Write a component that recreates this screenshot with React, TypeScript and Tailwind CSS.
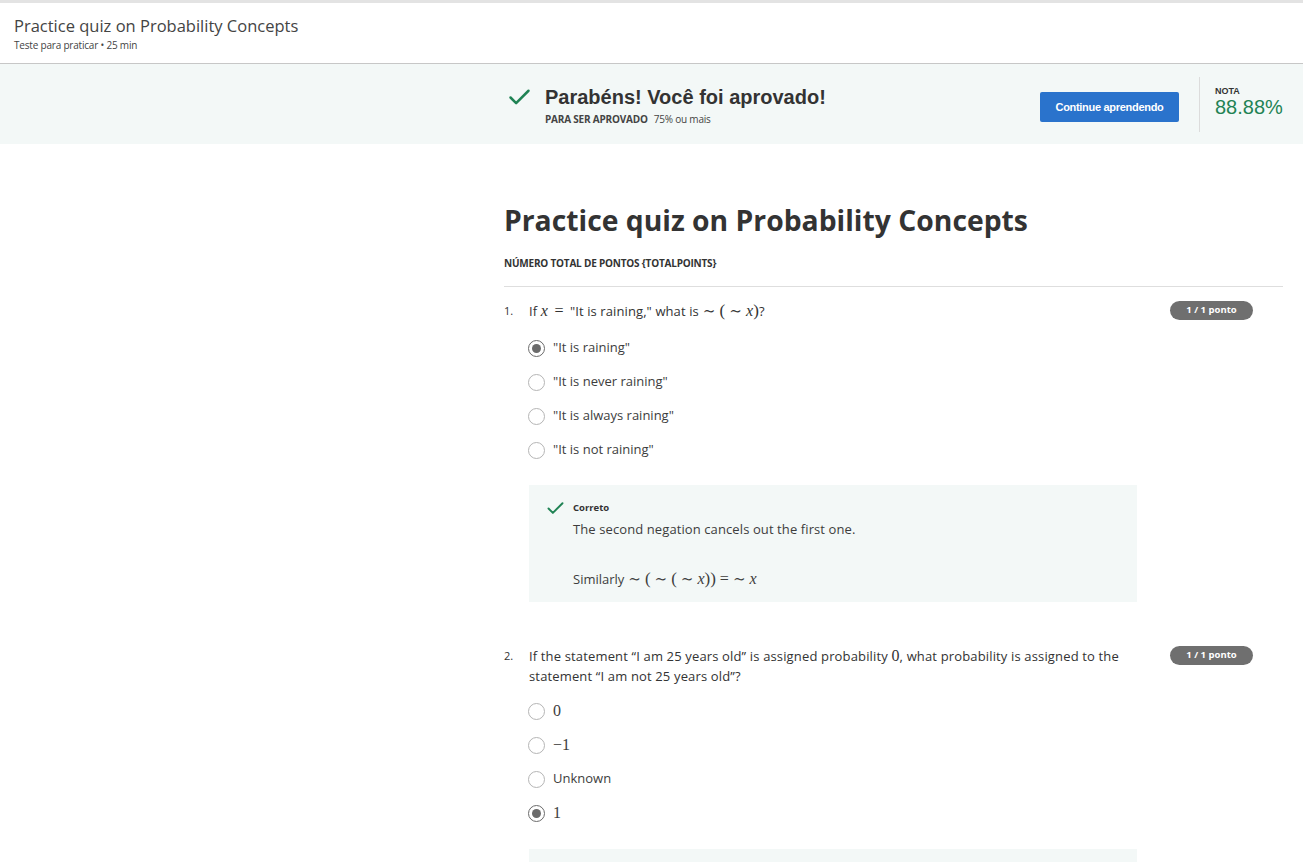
import { Check } from "lucide-react"

const sans = { fontFamily: "'Open Sans', 'Liberation Sans', sans-serif" }

function Tilde() {
  return <span className="font-['DejaVu_Serif',serif] text-[15px] leading-[20px] mx-[4px]">∼</span>
}

function X() {
  return <span className="font-['Liberation_Serif',serif] italic text-[16px] leading-[20px]">x</span>
}

function Paren({ children }: { children: React.ReactNode }) {
  return <span className="font-['Liberation_Serif',serif] text-[17px] leading-[20px]">{children}</span>
}

function Radio({ checked }: { checked?: boolean }) {
  return (
    <span
      className={`flex items-center justify-center w-[17px] h-[17px] rounded-full border-[1.5px] bg-white ${
        checked ? "border-[#6b6b6b]" : "border-[#b5b5b5]"
      }`}
    >
      {checked && <span className="w-[9px] h-[9px] rounded-full bg-[#6b6b6b]" />}
    </span>
  )
}

function Option({ checked, children }: { checked?: boolean; children: React.ReactNode }) {
  return (
    <div className="flex items-center h-[34px] gap-[8px] text-[13px] text-[#3d3d3d]">
      <Radio checked={checked} />
      <span>{children}</span>
    </div>
  )
}

function Badge() {
  return (
    <span className="shrink-0 h-[19px] w-[83px] rounded-full bg-[#6f6f6f] text-white text-[9.5px] font-bold flex items-center justify-center">
      1 / 1 ponto
    </span>
  )
}

export default function App() {
  return (
    <div className="min-h-screen bg-white text-[#333]" style={sans}>
      {/* top bar */}
      <div className="border-t-[3px] border-[#e3e3e3] bg-white">
        <header className="h-[61px] px-[14px] pt-[11px] border-b border-[#c7c7c7]">
          <h1 className="text-[16.5px] leading-[24px] text-[#444]">Practice quiz on Probability Concepts</h1>
          <p className="text-[10px] leading-[14px] text-[#444] tracking-[-0.2px]">Teste para praticar • 25 min</p>
        </header>
      </div>

      {/* result banner */}
      <div className="flex bg-[#f3f8f7] h-[80px]">
        <div className="w-[504px] shrink-0" />
        <div className="flex-1 flex items-center pr-[20px]">
          <div className="flex items-start pl-[2px] pt-[4px]">
            <Check className="w-[27px] h-[27px] text-[#1f8354] mt-[-1px]" strokeWidth={2.2} />
            <div className="ml-[12px]">
              <h2 className="font-['Liberation_Sans',sans-serif] font-bold text-[20px] leading-[24px] text-[#333]">
                Parabéns! Você foi aprovado!
              </h2>
              <p className="mt-[3px] text-[10px] text-[#444] tracking-[-0.2px]">
                <span className="font-bold">PARA SER APROVADO</span>
                <span className="ml-[6px]">75% ou mais</span>
              </p>
            </div>
          </div>
          <div className="flex-1" />
          <button className="mt-[6px] h-[30px] w-[139px] bg-[#2a73cc] rounded-[2px] text-white text-[11px] font-bold tracking-[-0.3px] font-['Liberation_Sans',sans-serif]">
            Continue aprendendo
          </button>
          <div className="w-px h-[55px] bg-[#dcdcdc] ml-[20px]" />
          <div className="ml-[15px] w-[68px] pb-[4px]">
            <div className="text-[9px] font-bold leading-[10px] text-[#333] font-['Liberation_Sans',sans-serif]">NOTA</div>
            <div className="text-[20px] leading-[22px] text-[#1f8354] font-['Liberation_Sans',sans-serif]">88.88%</div>
          </div>
        </div>
      </div>

      {/* main */}
      <div className="flex">
        <div className="w-[504px] shrink-0" />
        <main className="flex-1 pr-[20px] pt-[58px]">
          <h1 className="text-[28.3px] leading-[36px] font-bold text-[#333]">Practice quiz on Probability Concepts</h1>
          <p className="mt-[18px] text-[10px] font-bold text-[#333] tracking-[-0.2px]">NÚMERO TOTAL DE PONTOS {"{TOTALPOINTS}"}</p>
          <hr className="mt-[15px] border-[#dedede]" />

          {/* question 1 */}
          <section className="pt-[14px] pr-[30px]">
            <div className="flex items-start">
              <span className="w-[25px] text-[11px] leading-[20px] text-[#333]">1.</span>
              <p className="flex-1 text-[13px] leading-[20px] text-[#333] tracking-[0.1px]">
                If <X /> <span className="font-['Liberation_Serif',serif] text-[16px] leading-[20px] mx-[3px]">=</span> "It is raining," what is
                <Tilde />
                <Paren>(</Paren>
                <Tilde />
                <X />
                <Paren>)</Paren>?
              </p>
              <Badge />
            </div>
            <div className="ml-[24px] mt-[10px]">
              <Option checked>"It is raining"</Option>
              <Option>"It is never raining"</Option>
              <Option>"It is always raining"</Option>
              <Option>"It is not raining"</Option>
            </div>
            <div className="ml-[25px] mt-[18px] w-[608px] bg-[#f3f8f7] pl-[16px] pt-[16px] pb-[12px] flex">
              <Check className="w-[21px] h-[21px] text-[#1f8354] mt-[-3px]" strokeWidth={2.2} />
              <div className="ml-[7px]">
                <div className="text-[9.5px] font-bold text-[#333] leading-[14px]">Correto</div>
                <p className="text-[13px] leading-[18px] text-[#3d3d3d] mt-[5px] tracking-[0.1px]">The second negation cancels out the first one.</p>
                <p className="text-[13px] leading-[22px] text-[#3d3d3d] mt-[30px]">
                  Similarly
                  <Tilde />
                  <Paren>(</Paren>
                  <Tilde />
                  <Paren>(</Paren>
                  <Tilde />
                  <X />
                  <Paren>))</Paren>
                  <span className="font-['Liberation_Serif',serif] text-[16px] leading-[20px] ml-[4px]">=</span>
                  <Tilde />
                  <X />
                </p>
              </div>
            </div>
          </section>

          {/* question 2 */}
          <section className="pt-[44px] pr-[30px]">
            <div className="flex items-start">
              <span className="w-[25px] text-[11px] leading-[20px] text-[#333]">2.</span>
              <p className="w-[600px] text-[13px] leading-[20px] text-[#333] tracking-[0.15px]">
                If the statement “I am 25 years old” is assigned probability{" "}
                <span className="font-['Liberation_Serif',serif] text-[16px] leading-[20px]">0</span>, what probability is assigned to the statement “I am not 25 years old”?
              </p>
              <div className="flex-1" />
              <Badge />
            </div>
            <div className="ml-[24px] mt-[8px]">
              <Option>
                <span className="font-['Liberation_Serif',serif] text-[16px]">0</span>
              </Option>
              <Option>
                <span className="font-['Liberation_Serif',serif] text-[16px]">−1</span>
              </Option>
              <Option>Unknown</Option>
              <Option checked>
                <span className="font-['Liberation_Serif',serif] text-[16px]">1</span>
              </Option>
            </div>
            <div className="ml-[25px] mt-[19px] w-[608px] h-[60px] bg-[#f3f8f7]" />
          </section>
        </main>
      </div>
    </div>
  )
}
